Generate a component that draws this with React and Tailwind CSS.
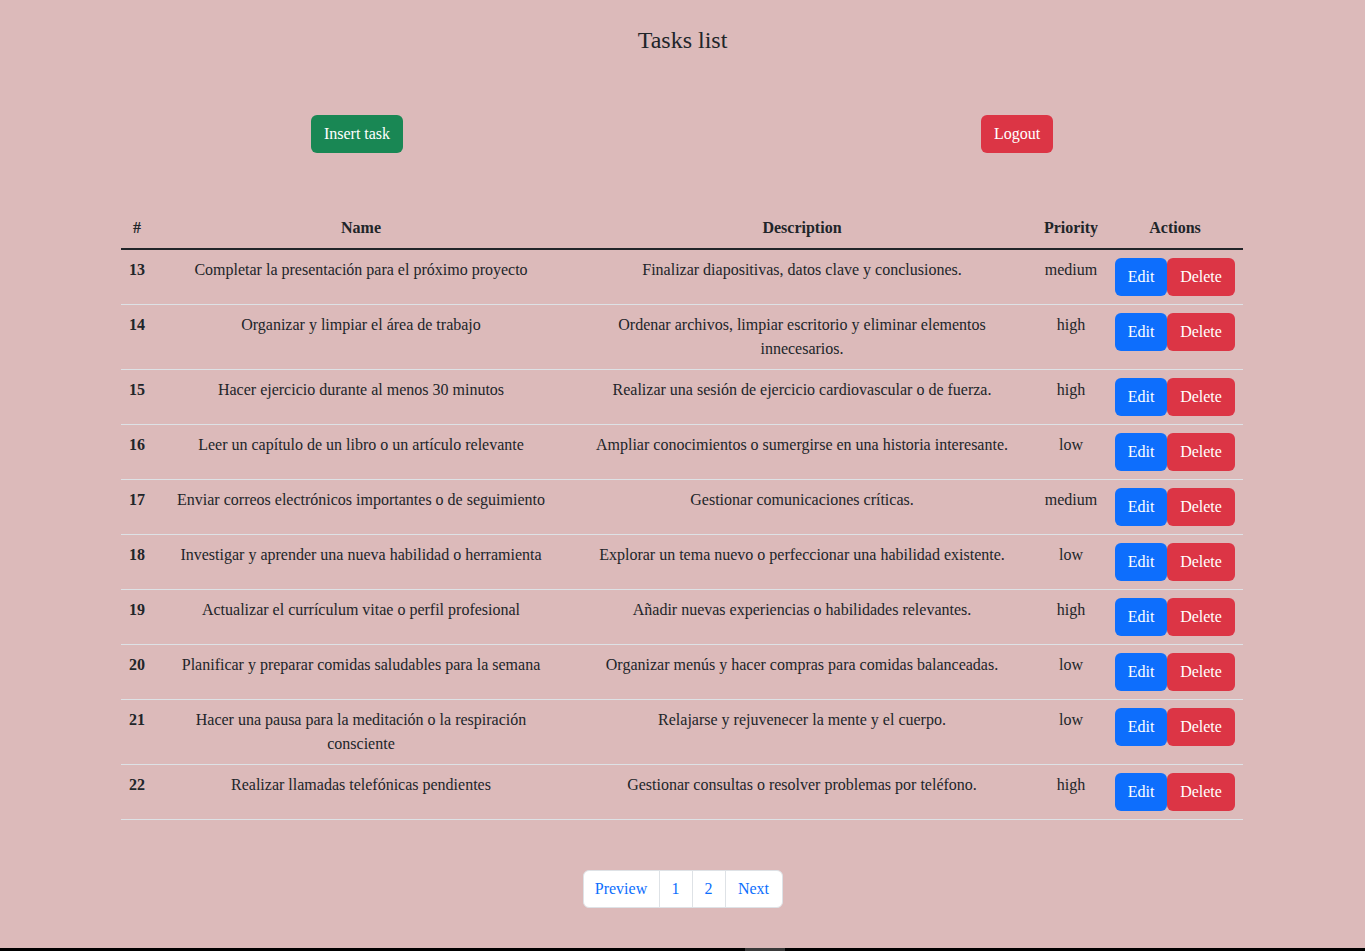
import React from 'react';

const tasks = [
  { id: 13, name: 'Completar la presentación para el próximo proyecto', description: 'Finalizar diapositivas, datos clave y conclusiones.', priority: 'medium' },
  { id: 14, name: 'Organizar y limpiar el área de trabajo', description: 'Ordenar archivos, limpiar escritorio y eliminar elementos innecesarios.', priority: 'high' },
  { id: 15, name: 'Hacer ejercicio durante al menos 30 minutos', description: 'Realizar una sesión de ejercicio cardiovascular o de fuerza.', priority: 'high' },
  { id: 16, name: 'Leer un capítulo de un libro o un artículo relevante', description: 'Ampliar conocimientos o sumergirse en una historia interesante.', priority: 'low' },
  { id: 17, name: 'Enviar correos electrónicos importantes o de seguimiento', description: 'Gestionar comunicaciones críticas.', priority: 'medium' },
  { id: 18, name: 'Investigar y aprender una nueva habilidad o herramienta', description: 'Explorar un tema nuevo o perfeccionar una habilidad existente.', priority: 'low' },
  { id: 19, name: 'Actualizar el currículum vitae o perfil profesional', description: 'Añadir nuevas experiencias o habilidades relevantes.', priority: 'high' },
  { id: 20, name: 'Planificar y preparar comidas saludables para la semana', description: 'Organizar menús y hacer compras para comidas balanceadas.', priority: 'low' },
  { id: 21, name: 'Hacer una pausa para la meditación o la respiración consciente', description: 'Relajarse y rejuvenecer la mente y el cuerpo.', priority: 'low' },
  { id: 22, name: 'Realizar llamadas telefónicas pendientes', description: 'Gestionar consultas o resolver problemas por teléfono.', priority: 'high' },
];

const App = () => {
  return (
    <div className="h-[951px] bg-black font-['Liberation_Serif',serif] text-[#212529] text-[16px] leading-[24px]">
      <div className="h-[948px] bg-[#dcbaba] flex flex-col">
        <h3 className="pt-[26px] text-center text-[24px] leading-[29px]">Tasks list</h3>

        {/* top buttons */}
        <div className="w-[1122px] ml-[121px] mt-[60px] flex">
          <button className="ml-[190px] h-[38px] w-[92px] rounded-[6px] bg-[#198754] text-white text-[16px]">
            Insert task
          </button>
          <button className="ml-[578px] h-[38px] w-[72px] rounded-[6px] bg-[#dc3545] text-white text-[16px]">
            Logout
          </button>
        </div>

        <table className="w-[1122px] ml-[121px] mt-[55px] table-fixed border-collapse">
          <colgroup>
            <col className="w-[32px]" />
            <col className="w-[416px]" />
            <col className="w-[466px]" />
            <col className="w-[72px]" />
            <col className="w-[136px]" />
          </colgroup>
          <thead>
            <tr className="border-b-2 border-[#212529]">
              <th className="p-[8px] font-bold">#</th>
              <th className="p-[8px] font-bold">Name</th>
              <th className="p-[8px] font-bold">Description</th>
              <th className="p-[8px] font-bold">Priority</th>
              <th className="p-[8px] font-bold">Actions</th>
            </tr>
          </thead>
          <tbody>
            {tasks.map(task => (
              <tr key={task.id} className="border-b border-[#dee2e6] align-top text-center">
                <th className="p-[8px] font-bold">{task.id}</th>
                <td className="p-[8px]">{task.name}</td>
                <td className="p-[8px]">{task.description}</td>
                <td className="p-[8px]">{task.priority}</td>
                <td className="p-[8px]">
                  <div className="flex">
                    <button className="h-[38px] w-[52px] rounded-[6px] bg-[#0d6efd] text-white">Edit</button>
                    <button className="h-[38px] w-[68px] rounded-[6px] bg-[#dc3545] text-white">Delete</button>
                  </div>
                </td>
              </tr>
            ))}
          </tbody>
        </table>

        {/* pagination */}
        <div className="mt-[50px] flex justify-center">
          <div className="flex bg-white border border-[#dee2e6] rounded-[6px] text-[#0d6efd] h-[38px]">
            <a className="w-[76px] flex items-center justify-center border-r border-[#dee2e6]">Preview</a>
            <a className="w-[33px] flex items-center justify-center border-r border-[#dee2e6]">1</a>
            <a className="w-[33px] flex items-center justify-center border-r border-[#dee2e6]">2</a>
            <a className="w-[56px] flex items-center justify-center">Next</a>
          </div>
        </div>
      </div>
      <div className="ml-[745px] w-[40px] h-[3px] bg-[#3a3a3a]" />
    </div>
  );
};

export default App;
